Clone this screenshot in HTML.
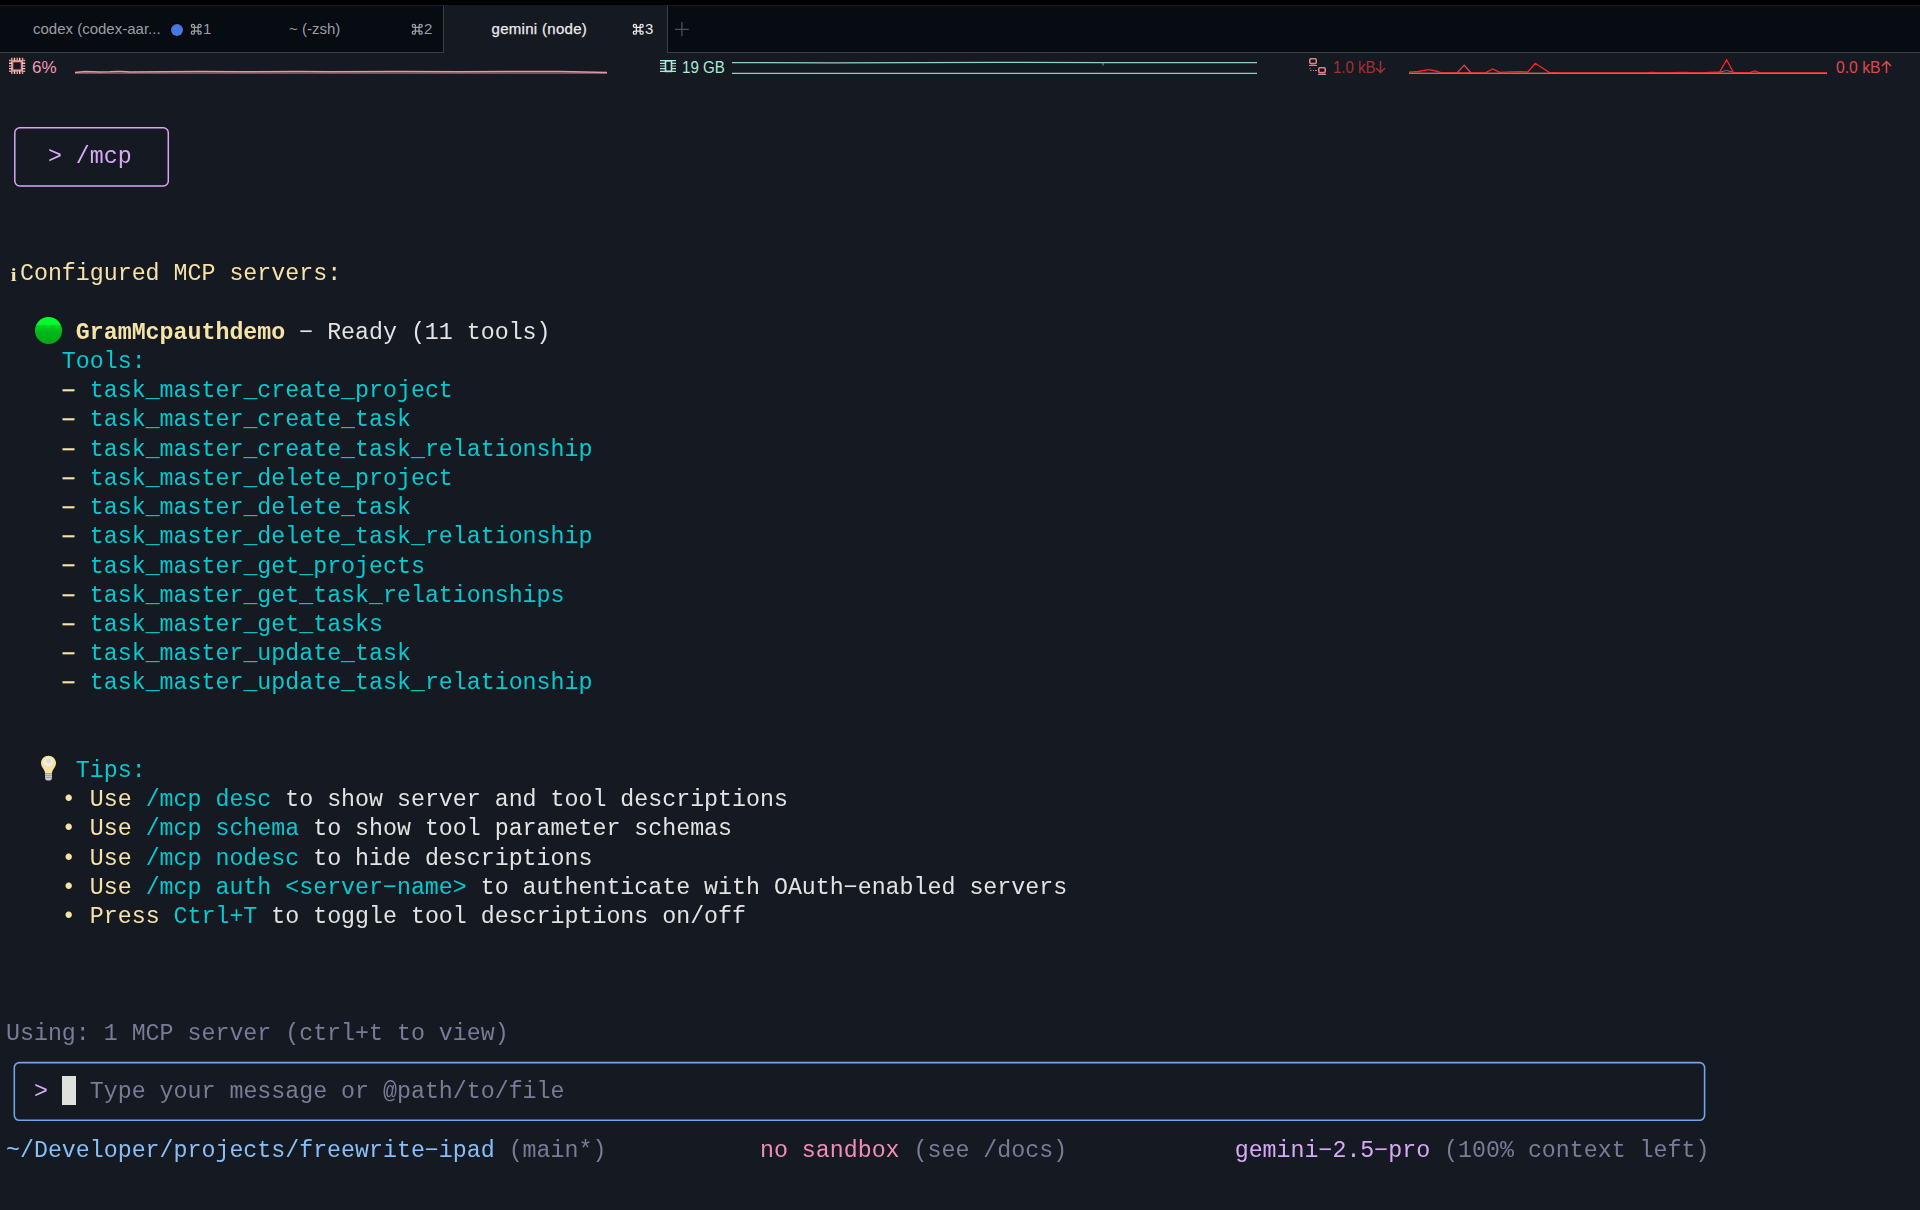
<!DOCTYPE html>
<html><head><meta charset="utf-8">
<style>
html,body{margin:0;padding:0;}
body{width:1920px;height:1210px;overflow:hidden;background:#151921;position:relative;font-family:"Liberation Sans",sans-serif;}
.abs{position:absolute;}
#topstrip{left:0;top:0;width:1920px;height:5px;background:#000;}
#tabbar{left:0;top:5px;width:1920px;height:47px;background:#070b12;}
#tabline{left:0;top:52px;width:1920px;height:1px;background:#3a3e45;}
#activetab{left:444px;top:5px;width:223px;height:48px;background:#151921;}
.vsep{width:1px;background:#3a3e45;top:6px;height:47px;}
.tt{font-size:15px;color:#9c9ea3;white-space:pre;line-height:18px;top:20px;}
.term{will-change:transform;font-family:"Liberation Mono",monospace;font-size:23.28px;white-space:pre;line-height:29.21875px;position:absolute;left:6.1px;}
.cy{color:#05cad0}
.ye{color:#f6e3a8}
.wh{color:#e3e3e3}
.gr{color:#7a7b96}
.bl{color:#89bff8}
.pk{color:#f48db3}
.pu{color:#d8a9f7}
.b{font-weight:bold}
.dsh{position:relative;top:0.9px;-webkit-text-stroke:0.35px #f6e3a8}
.sb{font-size:17px;white-space:pre;line-height:20px;top:57px;}
</style></head>
<body>
<div class="abs" id="topstrip"></div>
<div class="abs" id="tabbar"></div>
<div class="abs" id="tabline"></div>
<div class="abs" style="left:0;top:5px;width:1920px;height:1px;background:#1c1f26"></div>
<div class="abs" id="activetab"></div>
<div class="abs vsep" style="left:443px"></div>
<div class="abs vsep" style="left:667px"></div>

<div class="abs tt" style="left:33px">codex (codex-aar...</div>
<div class="abs" style="left:171px;top:23.5px;width:12px;height:12px;border-radius:50%;background:#4677e3;box-shadow:0 0 0 1.3px #000"></div>
<div class="abs tt" style="left:190px"><svg width="12.5" height="12.5" viewBox="0 0 24 24" style="vertical-align:-1.5px;margin-right:0.5px" fill="none" stroke="currentColor" stroke-width="2.5"><path d="M15.5 5.5v13a3 3 0 1 0 3-3h-13a3 3 0 1 0 3 3v-13a3 3 0 1 0-3 3h13a3 3 0 1 0-3-3z"/></svg>1</div>
<div class="abs tt" style="left:289px">~ (-zsh)</div>
<div class="abs tt" style="left:411px"><svg width="12.5" height="12.5" viewBox="0 0 24 24" style="vertical-align:-1.5px;margin-right:0.5px" fill="none" stroke="currentColor" stroke-width="2.5"><path d="M15.5 5.5v13a3 3 0 1 0 3-3h-13a3 3 0 1 0 3 3v-13a3 3 0 1 0-3 3h13a3 3 0 1 0-3-3z"/></svg>2</div>
<div class="abs tt" style="left:491.5px;color:#ececec;letter-spacing:0.3px;-webkit-text-stroke:0.25px #ececec">gemini (node)</div>
<div class="abs tt" style="left:632px;color:#e8e8e8"><svg width="12.5" height="12.5" viewBox="0 0 24 24" style="vertical-align:-1.5px;margin-right:0.5px" fill="none" stroke="currentColor" stroke-width="2.5"><path d="M15.5 5.5v13a3 3 0 1 0 3-3h-13a3 3 0 1 0 3 3v-13a3 3 0 1 0-3 3h13a3 3 0 1 0-3-3z"/></svg>3</div>
<svg class="abs" style="left:670px;top:18px" width="24" height="22" viewBox="670 18 24 22"><path d="M675 29.3h13.8M681.9 22v14.2" stroke="#4b4f57" stroke-width="1.3"/></svg>

<!-- status bar -->
<div class="abs sb" style="left:32px;top:58px;color:#ef9bb0">6%</div>
<div class="abs sb" style="left:682px;top:58px;color:#a6ecd6;transform:scaleX(0.89);transform-origin:0 0">19 GB</div>
<div class="abs sb" style="left:1333px;top:58px;color:#a53030;transform:scaleX(0.885);transform-origin:0 0">1.0 kB</div><svg class="abs" style="left:1375px;top:60px" width="11" height="14" viewBox="0 0 11 14"><path d="M5.5 1v11.5M1 8l4.5 4.5L10 8" fill="none" stroke="#a53030" stroke-width="1.5"/></svg>
<div class="abs sb" style="left:1836px;top:58px;color:#e0474b;transform:scaleX(0.925);transform-origin:0 0">0.0 kB</div><svg class="abs" style="left:1881px;top:60px" width="11" height="14" viewBox="0 0 11 14"><path d="M5.5 13V1.5M1 6l4.5-4.5L10 6" fill="none" stroke="#e0474b" stroke-width="1.5"/></svg>
<svg class="abs" style="left:0;top:53px" width="1920" height="32" viewBox="0 53 1920 32">
 <!-- cpu icon -->
 <g fill="none" stroke="#e8919f" stroke-width="2.2">
  <rect x="12.2" y="61.2" width="9.7" height="9.3"/>
 </g>
 <g stroke="#e8919f" stroke-width="1.5">
  <path d="M11.8 57.8v3M17.3 57.8v3M22.5 57.8v3M11.8 71v3M17.3 71v3M22.5 71v3"/>
  <path d="M9 60.5h3M9 66h3M9 71.2h3M22 60.5h3.2M22 66h3.2M22 71.2h3.2"/>
 </g>
 <g stroke="#eadb9c" stroke-width="1.4">
  <path d="M14.5 57.8v3M19.7 57.8v3M14.5 71v3M19.7 71v3"/>
  <path d="M9 63.3h3M9 68.6h3M22 63.3h3.2M22 68.6h3.2"/>
 </g>
 <!-- cpu graph -->
 <polyline fill="none" stroke="#8c6a6e" stroke-width="1.2" points="75,73.2 607,73.2"/>
 <polyline fill="none" stroke="#e597a6" stroke-width="1.5" points="75,72.4 85,71.6 100,71.9 110,71.8 117,71.4 122,71.6 130,71.9 200,71.6 240,71.8 300,71.4 330,71.8 400,71.4 460,71.8 520,71.4 560,71.6 607,72.6"/>
 <!-- ram icon -->
 <g fill="none" stroke="#a6ecd6" stroke-width="1.6">
  <rect x="665.5" y="60.8" width="6" height="10.6"/>
 </g>
 <g stroke="#a6ecd6" stroke-width="1.1">
  <path d="M660 60.6h16M660 63.4h5M672 63.4h4M660 68.6h5M672 68.6h4M660 71.4h16"/>
 </g>
 <g stroke="#b8bcbc" stroke-width="1.2"><path d="M660 66h5M672 66h4"/></g>
 <!-- ram graph -->
 <polyline fill="none" stroke="#8fd4c2" stroke-width="1.2" points="732,62.6 833,62.8 1000,62.4 1103,62.6 1257,62.6"/>
 <path d="M1103 62.6v3" stroke="#6fa89a" stroke-width="1"/>
 <polyline fill="none" stroke="#8fd4c2" stroke-width="1.2" points="732,73.4 1257,73.4"/>
 <!-- net icon -->
 <g fill="#111" stroke="#e0808f" stroke-width="1.6">
  <rect x="1309.8" y="58.8" width="6.4" height="4.8" rx="1"/>
  <rect x="1318.8" y="67.8" width="6.4" height="4.8" rx="1"/>
 </g>
 <g stroke="#d88090" stroke-width="1.2"><path d="M1309 65.5h8M1318 74.3h8"/></g>
 <g stroke="#9a9090" stroke-width="1"><path d="M1310 68v1M1310 70.5h1.5M1313 70.5h1M1315 70.5h2"/></g>
 <!-- net graph -->
 <polyline fill="none" stroke="#7f7f85" stroke-width="1.2" points="1409,73.4 1827,73.4"/>
 <polyline fill="none" stroke="#e0485a" stroke-width="1.2" points="1442,73 1457,73 1464.2,65.1 1471,73"/>
 <polyline fill="none" stroke="#8a6a70" stroke-width="1" points="1716,73 1726.6,70.5 1736,73"/>
 <polyline fill="none" stroke="#ff2226" stroke-width="1.3" points="1409,72.2 1418,71.5 1428.6,69.7 1436,71 1442.4,73 1484.8,73 1492.6,69 1499.7,72.4 1510,71.8 1520,71.6 1527.8,72 1535.2,63.3 1549,72.4 1560,72.8 1600,72.9 1648,72.6 1652,72.3 1660,72.9 1684,72.5 1700,72.8 1719.7,72 1726.6,59.8 1733.4,72.6 1750,72.6 1754.6,71 1760,72.8 1827,72.9"/>
 <polyline fill="none" stroke="#f05060" stroke-width="1.1" points="1409,73.4 1827,73.4"/>
</svg>
<pre class="term" id="termtext" style="top:84.8px;margin:0"> 

   <span class="pu">&gt; /mcp</span>



 <span class="ye">Configured MCP servers:</span>

     <span class="ye b">GramMcpauthdemo</span><span class="wh"> − Ready (11 tools)</span>
    <span class="cy">Tools:</span>
    <span class="ye dsh">−</span> <span class="cy">task_master_create_project</span>
    <span class="ye dsh">−</span> <span class="cy">task_master_create_task</span>
    <span class="ye dsh">−</span> <span class="cy">task_master_create_task_relationship</span>
    <span class="ye dsh">−</span> <span class="cy">task_master_delete_project</span>
    <span class="ye dsh">−</span> <span class="cy">task_master_delete_task</span>
    <span class="ye dsh">−</span> <span class="cy">task_master_delete_task_relationship</span>
    <span class="ye dsh">−</span> <span class="cy">task_master_get_projects</span>
    <span class="ye dsh">−</span> <span class="cy">task_master_get_task_relationships</span>
    <span class="ye dsh">−</span> <span class="cy">task_master_get_tasks</span>
    <span class="ye dsh">−</span> <span class="cy">task_master_update_task</span>
    <span class="ye dsh">−</span> <span class="cy">task_master_update_task_relationship</span>


     <span class="cy">Tips:</span>
    <span class="ye">• Use </span><span class="cy">/mcp desc</span><span class="wh"> to show server and tool descriptions</span>
    <span class="ye">• Use </span><span class="cy">/mcp schema</span><span class="wh"> to show tool parameter schemas</span>
    <span class="ye">• Use </span><span class="cy">/mcp nodesc</span><span class="wh"> to hide descriptions</span>
    <span class="ye">• Use </span><span class="cy">/mcp auth &lt;server−name&gt;</span><span class="wh"> to authenticate with OAuth−enabled servers</span>
    <span class="ye">• Press </span><span class="cy">Ctrl+T</span><span class="wh"> to toggle tool descriptions on/off</span>



<span class="gr">Using: 1 MCP server (ctrl+t to view)</span>

  <span class="pu">&gt;</span>   <span class="gr">Type your message or @path/to/file</span>

<span class="bl">~/Developer/projects/freewrite−ipad</span><span class="gr"> (main*)</span>           <span class="pk">no sandbox</span><span class="gr"> (see /docs)</span>            <span class="pu">gemini−2.5−pro</span><span class="gr"> (100% context left)</span>
</pre>

<!-- info icon -->
<div class="abs" style="left:10.9px;top:265.3px;font-family:'Liberation Serif',serif;font-weight:bold;font-size:18.5px;line-height:20px;color:#f6e3a8;transform:scaleX(1.12)">i</div>
<!-- green circle -->
<div class="abs" style="left:35.2px;top:317px;width:26.5px;height:26.5px;border-radius:50%;background:linear-gradient(#00ff2c 0%,#00f82a 30%,#00d422 31%,#00b81a 55%,#00a814 100%)"></div>
<!-- bulb -->
<svg class="abs" style="left:40px;top:755px" width="17" height="27" viewBox="0 0 17 27">
 <path d="M8.5 0.8C4.4 0.8 1 4 1 8.1c0 2.8 1.5 4.6 2.6 6.2 .9 1.3 1.4 2.6 1.5 4.2h6.8c.1-1.6.6-2.9 1.5-4.2 1.1-1.6 2.6-3.4 2.6-6.2C16 4 12.6 0.8 8.5 0.8z" fill="#fbe29c"/>
 <ellipse cx="8.3" cy="7" rx="4.6" ry="4.3" fill="#eeeeee"/>
 <ellipse cx="8.8" cy="6" rx="2.6" ry="2.3" fill="#dcdcdc"/>
 <path d="M5 18.5h7v4.5c0 1.6-1.4 2.6-3.5 2.6S5 24.6 5 23z" fill="#c8c8c8"/>
 <path d="M5 20.5h7M5 22.5h7" stroke="#9a9a9a" stroke-width=".8"/>
</svg>
<svg class="abs" style="left:0;top:100px" width="200" height="110" viewBox="0 100 200 110"><rect x="14.8" y="127.8" width="153.5" height="58.2" rx="5" fill="none" stroke="#d6a6f6" stroke-width="1.5"/></svg>
<svg class="abs" style="left:0;top:1040px" width="1730" height="100" viewBox="0 1040 1730 100"><rect x="14.3" y="1062.6" width="1690.3" height="57.7" rx="5" fill="none" stroke="#72a6e8" stroke-width="1.6"/></svg>
<div class="abs" style="left:62px;top:1075.5px;width:14px;height:29px;background:#e0e0dc"></div>

</body></html>
